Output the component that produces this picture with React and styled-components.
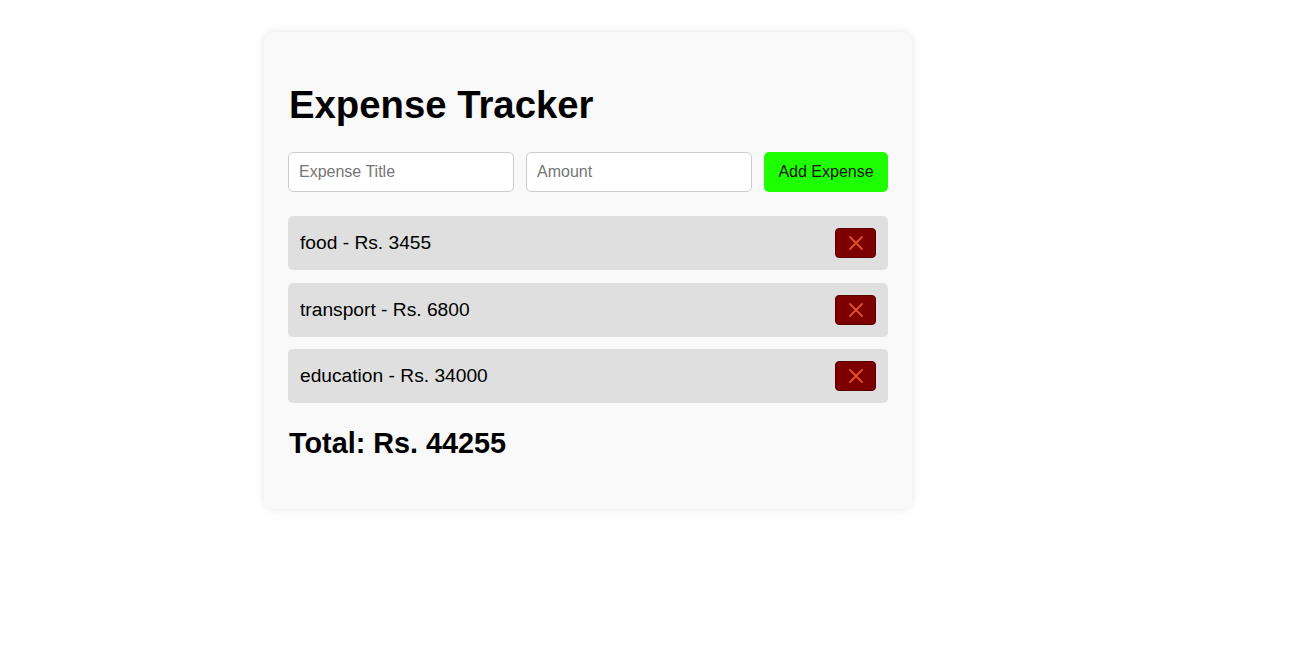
import React, { useState } from 'react';
import styled, { createGlobalStyle } from 'styled-components';

const GlobalStyle = createGlobalStyle`
  body {
    margin: 0;
    background: #ffffff;
    font-family: 'Liberation Sans', Arial, sans-serif;
  }
`;

const Page = styled.div`
  padding: 32px 0 60px 264px;
`;

const Card = styled.div`
  width: 600px;
  padding: 24px;
  background: #f9f9f9;
  border-radius: 10px;
  box-shadow: 0 0 10px rgba(0, 0, 0, 0.1);
`;

const Title = styled.h1`
  margin: 27px 0 25px 1px;
  font-size: 38.3px;
  font-weight: 700;
  color: #000;
`;

const InputRow = styled.div`
  display: flex;
  gap: 12px;
  margin-bottom: 24px;
`;

const TextInput = styled.input`
  flex: 1;
  min-width: 0;
  height: 40px;
  box-sizing: border-box;
  padding: 0 10px;
  border: 1px solid #ccc;
  border-radius: 5px;
  background: #fff;
  font-family: 'Liberation Sans', Arial, sans-serif;
  font-size: 16px;
  color: #000;

  &::placeholder {
    color: #757575;
  }
`;

const AddButton = styled.button`
  width: 124px;
  height: 40px;
  flex-shrink: 0;
  border: none;
  border-radius: 5px;
  background: #1eff00;
  color: #111;
  font-family: 'Liberation Sans', Arial, sans-serif;
  font-size: 16px;
  cursor: pointer;
`;

const List = styled.ul`
  list-style: none;
  margin: 0 0 24px;
  padding: 0;
  display: flex;
  flex-direction: column;
  gap: 12.5px;
`;

const Item = styled.li`
  display: flex;
  align-items: center;
  justify-content: space-between;
  height: 54px;
  padding: 0 12px;
  background: #dfdfdf;
  border-radius: 5px;
  font-size: 19.2px;
  color: #000;
`;

const DeleteButton = styled.button`
  width: 41px;
  height: 30px;
  padding: 0;
  display: flex;
  align-items: center;
  justify-content: center;
  border: 1px solid #5a0000;
  border-radius: 4px;
  background: #7d0000;
  cursor: pointer;
`;

const Total = styled.h2`
  margin: 0 0 25px 1px;
  font-size: 28.8px;
  font-weight: 700;
  color: #000;
`;

const CrossIcon = () => (
  <svg width="14" height="14" viewBox="0 0 14 14">
    <path d="M1 1 L13 13 M13 1 L1 13" stroke="#e2502b" strokeWidth="1.8" strokeLinecap="round" />
  </svg>
);

const initial = [
  { id: 1, title: 'food', amount: 3455 },
  { id: 2, title: 'transport', amount: 6800 },
  { id: 3, title: 'education', amount: 34000 },
];

export default function App() {
  const [expenses, setExpenses] = useState(initial);
  const [title, setTitle] = useState('');
  const [amount, setAmount] = useState('');

  const addExpense = () => {
    if (!title || !amount) return;
    setExpenses([...expenses, { id: Date.now(), title, amount: Number(amount) }]);
    setTitle('');
    setAmount('');
  };

  const removeExpense = (id) => {
    setExpenses(expenses.filter((e) => e.id !== id));
  };

  const total = expenses.reduce((sum, e) => sum + e.amount, 0);

  return (
    <>
      <GlobalStyle />
      <Page>
        <Card>
          <Title>Expense Tracker</Title>
          <InputRow>
            <TextInput
              placeholder="Expense Title"
              value={title}
              onChange={(e) => setTitle(e.target.value)}
            />
            <TextInput
              type="number"
              placeholder="Amount"
              value={amount}
              onChange={(e) => setAmount(e.target.value)}
            />
            <AddButton onClick={addExpense}>Add Expense</AddButton>
          </InputRow>
          <List>
            {expenses.map((e) => (
              <Item key={e.id}>
                <span>
                  {e.title} - Rs. {e.amount}
                </span>
                <DeleteButton onClick={() => removeExpense(e.id)}>
                  <CrossIcon />
                </DeleteButton>
              </Item>
            ))}
          </List>
          <Total>Total: Rs. {total}</Total>
        </Card>
      </Page>
    </>
  );
}
